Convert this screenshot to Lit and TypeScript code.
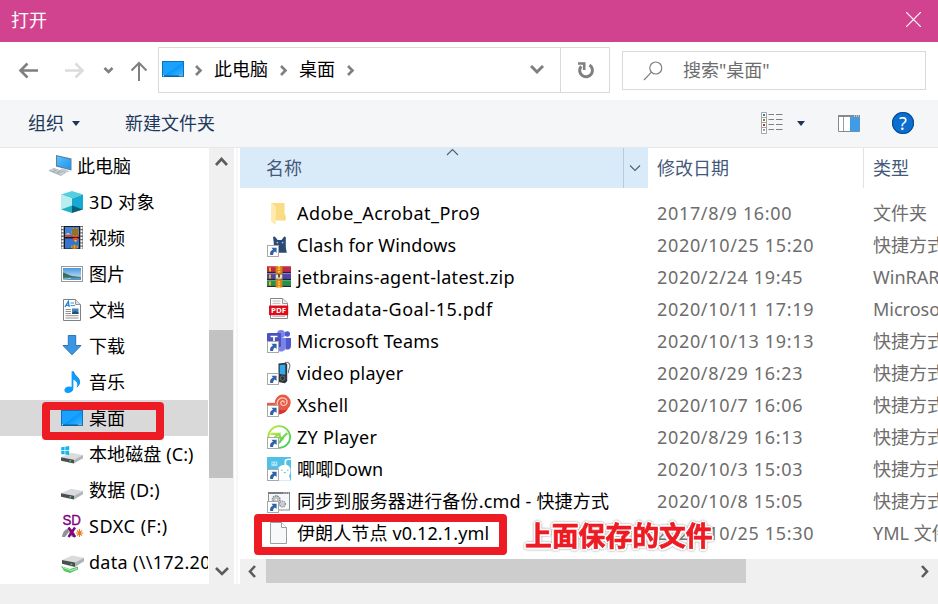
import { LitElement, html, css, svg, nothing } from "lit";
import { customElement, property } from "lit/decorators.js";

const shortcut = svg`
  <rect x=".5" y="12.5" width="11" height="11" fill="#fff" stroke="#a9a9a9"/>
  <path d="M4.4 14.8H9.6V20L7.9 18.4C6.4 19.4 6 20.6 6.2 22H3.2C2.6 19.6 3.6 17.6 6 16.5Z" fill="#2f63a6"/>`;

const desktopGlyph = svg`
  <defs><linearGradient id="dsk" x1="0" y1="0" x2="1" y2="1">
    <stop offset="0" stop-color="#19a0fb"/><stop offset=".5" stop-color="#1ba2ff"/><stop offset=".52" stop-color="#0597fb"/><stop offset="1" stop-color="#4cb6ff"/>
  </linearGradient></defs>
  <rect x="1.5" y="4.5" width="21" height="15" fill="url(#dsk)" stroke="#0a74b8"/>
  <path d="M2 19H22" stroke="#08598f"/><path d="M2 18.8h1M18.5 18.8h1M20.5 18.8h1" stroke="#fff"/>`;

const drive = svg`
  <path d="M1 15.3L11 10.8 23 13 14 17.7Z" fill="#d9dbdd"/>
  <path d="M14 17.7L23 13V16.2L14 21.5Z" fill="#b4b7ba"/>
  <path d="M1 15.3L14 17.7V21.5L1 18.8Z" fill="#4c4e51"/>
  <path d="M9.5 18.6l1.6.4" stroke="#4fe04f" stroke-width="1.4"/>`;

const ICONS: Record<string, unknown> = {
  desktop: desktopGlyph,
  pc: svg`
    <defs><linearGradient id="pcg" x1="0" y1="0" x2="1" y2="1"><stop offset="0" stop-color="#5fc3fb"/><stop offset=".5" stop-color="#38aaf5"/><stop offset="1" stop-color="#2496ec"/></linearGradient></defs>
    <path d="M8 1L23.5 4.5V16.5L8 12.5Z" fill="#5a7f9b"/><path d="M9 2.3L22.6 5.4V15.2L9 11.6Z" fill="url(#pcg)"/>
    <path d="M14 14.2l3.6 1 4.2 2.2-4.6 1.4-6-2z" fill="#c3ccd3"/>
    <path d="M1 16.6L6 14.4 17.5 18.6 13 21.6Z" fill="#d7dde1" stroke="#9aa6af" stroke-width=".7"/>
    <path d="M3 16.8l9.8 3.4M5 15.8l9.8 3.3M5 18.2l3-2.4M9 19.6l3-2.3" stroke="#8998a4" stroke-width=".6"/>`,
  cube: svg`
    <path d="M12 1L23 4.5 12 8.5 1 4.5Z" fill="#55cfdf"/><path d="M1 4.5L12 8.5V17L1 19.5Z" fill="#b9eef1"/>
    <path d="M23 4.5L12 8.5V17L23 19.5Z" fill="#17a9d4"/><path d="M12 15.5L1 19.5 12 23Z" fill="#20b2c4"/><path d="M12 15.5L23 19.5 12 23Z" fill="#075f78"/>`,
  video: svg`
    <rect x="1" y="0" width="22" height="23" fill="#6b6b6b"/><rect x="4" y="0" width="16" height="23" fill="#1a1a1a"/>
    <rect x="5" y="1" width="14" height="10" fill="#3f84d8"/><rect x="5" y="12.5" width="14" height="10" fill="#3476cf"/>
    <path d="M5 9.5l4-1 3 1 7-.5v2H5z" fill="#c8483e"/><path d="M5 8.5l3-1.5 3 1.5" fill="#e9dcc9"/>
    <ellipse cx="15" cy="6" rx="3.4" ry="4" fill="#e9a52b"/><path d="M13 3v6M15 2v8M17 3v6" stroke="#36301e" stroke-width=".9"/>
    <ellipse cx="15.5" cy="13" rx="2.8" ry="1.6" fill="#e74b31"/><path d="M14 14h3l-1 2h-1z" fill="#e3bb38"/>
    <ellipse cx="14.5" cy="20.7" rx="3.3" ry="2" fill="#e9a52b"/><path d="M13 19v4M16 19v4" stroke="#5f451d" stroke-width=".8"/>
    <path d="M2.5 1V23M21.5 1V23" stroke="#fff" stroke-width="1.9" stroke-dasharray="2 1.3"/>`,
  image: svg`
    <defs><linearGradient id="sky" x1="0" y1="0" x2="0" y2="1"><stop offset="0" stop-color="#4b98dc"/><stop offset="1" stop-color="#d5ecf8"/></linearGradient></defs>
    <rect x="1.5" y="4.5" width="21" height="15" fill="#fff" stroke="#9a9a9a"/><rect x="3" y="6" width="18" height="12" fill="url(#sky)"/>
    <path d="M3 10.5c3 .5 6 3 9 3.6l9 .8V16H3z" fill="#3b6f58"/><path d="M3 15.5h18v2.5H3z" fill="#5b95bd"/><path d="M3 17.5l8-1.2" stroke="#a4c8db"/>`,
  document: svg`
    <path d="M3.5 1.5H15.5L20.5 6.5V22.5H3.5Z" fill="#fff" stroke="#7f8285"/><path d="M15.5 1.5V6.5H20.5" fill="#dfe2e4" stroke="#94989b"/>
    <path d="M5 9L8.3 3.4 9.2 9M6.2 7.3H9" fill="none" stroke="#1d86cc" stroke-width="1.3"/><path d="M10.5 5H14M10.5 7.6H15" stroke="#3c8fcf"/>
    <path d="M5.5 11.5H11M5.5 13.5H11M5.5 15.5H11M5.5 17.7H18.5M5.5 20H18.5" stroke="#8d9194"/>
    <rect x="12" y="10.5" width="6.5" height="5.5" fill="#3f83c3"/><path d="M12 15l3-2 3.5 1.6V16H12z" fill="#244d66"/>`,
  download: svg`<path d="M8.3 1.5H15.7V11.5H21L12 20.8 3 11.5H8.3Z" fill="#3b96e2" stroke="#2b76be"/>`,
  music: svg`
    <path d="M11.6 1.2H13.4C14.5 6 20 7.5 19.6 12.5 19.3 14.6 18.3 16.2 16.9 17.2 18.2 13.7 16.4 11.2 13.4 9.7V18.5C13.4 21 11.3 22.8 8.3 23 5.8 23.1 4.3 21.9 4.4 20 4.6 17.8 7 16.4 9.8 16.6L11.6 17Z" fill="#0f9dfb"/>
    <path d="M13.4 1.5C14.5 6 20 7.5 19.6 12.5 19.3 14.6 18.3 16.2 16.9 17.2" fill="none" stroke="#0b74c0" stroke-width=".8"/>`,
  system: svg`${drive}<path d="M1.2 5.3L4.6 4.8V8.2H1.2ZM5.3 4.7L9.2 4.1V8.2H5.3ZM1.2 8.9H4.6V12.4L1.2 11.9ZM5.3 8.9H9.2V13L5.3 12.5Z" fill="#12b5f0"/>`,
  drive,
  sd: svg`
    <path d="M2 23C3 15 8 13.5 13 15.5L16 23H12L9 18 5 23Z" fill="#8a94a0"/><path d="M8 15.5l5 .4-3 6.1z" fill="#d9b760"/>
    <text x="2.4" y="11.4" textLength="18.5" lengthAdjust="spacingAndGlyphs" font-family="Liberation Sans" font-size="15" stroke="#800080" stroke-width=".4" fill="#800080">SD</text>
    <path d="M8.5 13.5L15 23M15 13.5L8.5 23" stroke="#800080" stroke-width="2.4"/>
    <path d="M19.5 15v8M15.8 19h7.4M17 16.4l5 5.2M22 16.4l-5 5.2" stroke="#ef7a22" stroke-width="1.1"/>`,
  network: svg`
    <path d="M1 16l9 3 8-2.5v3L10 23 4 21z" fill="#5ac46a"/><path d="M3 17.5l8 3 6-2" stroke="#b6efbd" stroke-width="1" fill="none"/>
    <path d="M2 10L12 5.5 24 7.8 15 12.5Z" fill="#d9dbdd"/><path d="M15 12.5L24 7.8V11.3L15 17Z" fill="#b0b3b6"/><path d="M2 10L15 12.5V17L2 13.8Z" fill="#4b4d50"/><path d="M10.5 14.2l1.8.5" stroke="#4fe04f" stroke-width="1.4"/>`,
  folder: svg`
    <path d="M4.5 2H17.5V15.5H18.3V19.5H8V23L4.5 20.5Z" fill="#f9dc84"/><path d="M4.5 2L8.8 5.3V23L4.5 20.5Z" fill="#fdebb0"/><path d="M17.5 13V19.5H18.3V13.8Z" fill="#efc75c"/>`,
  clash: svg`
    <path d="M6 4L7.8 3.6 10.7 7H14.5L17.2 3.6 18.8 4V14.5L19.8 19.8H6.8V10Z" fill="#2b4a73"/>
    <circle cx="10.4" cy="9.6" r=".9" fill="#a3bad5"/><circle cx="15.6" cy="9.6" r=".9" fill="#a3bad5"/>${shortcut}`,
  rar: svg`
    <rect x="0" y="1" width="24" height="7" fill="#b92c48"/><rect x="0" y="8" width="24" height="7" fill="#4c47a5"/><rect x="0" y="15" width="24" height="7" fill="#259150"/>
    <path d="M0 1.6H24" stroke="#e45a73"/><path d="M0 8.6H24" stroke="#8585d5"/><path d="M0 15.6H24" stroke="#49bc6b"/>
    <path d="M0 7.4H24M0 14.4H24M0 21.4H24" stroke="#2e1838"/><path d="M2 2.5h2v4H2zM2 9.5h2v4H2zM2 16.5h2v4H2z" fill="#efab25"/>
    <rect x="8.6" y="1" width="6.8" height="21.5" fill="#d88516"/><path d="M12 1V23" stroke="#f8cd4a" stroke-width="2.2" stroke-dasharray="1.6 .9"/>
    <rect x="8.4" y="9" width="7.2" height="5.2" rx="1.5" fill="#e6dfd3" stroke="#64513b" stroke-width=".8"/><path d="M12 9v3.5" stroke="#725227" stroke-width="2"/>`,
  pdf: svg`
    <path d="M3.5 1.5H15.5L20.5 6V21.5H3.5Z" fill="#fff" stroke="#858585"/><path d="M15.5 1.5V6.5H20.5" fill="#eee" stroke="#999"/><path d="M5.5 4H13.5M5.5 6.3H13.5M5.5 19.5H18" stroke="#b9b9b9"/>
    <rect x="2" y="8.6" width="19.2" height="9.6" rx=".6" fill="#e00b18"/>
    <text x="4" y="16.2" textLength="15" lengthAdjust="spacingAndGlyphs" font-family="Noto Sans" font-size="7.7" font-weight="700" fill="#fff">PDF</text>`,
  teams: svg`
    <circle cx="20.3" cy="5" r="2.7" fill="#5059c9"/><path d="M18 9H24V17C24 20 21.5 21 18.5 20.5Z" fill="#5059c9"/>
    <circle cx="14" cy="5" r="4" fill="#7b83eb"/><path d="M10 9H19V17C19 21 16.2 23 13 22.5L10 21.5Z" fill="#7b83eb"/>
    <rect x="0" y="4" width="14" height="14" rx="1" fill="#4b53bc"/><path d="M3.5 7.5H10.5M7 7.5V14" stroke="#fff" stroke-width="1.7"/>${shortcut}`,
  player: svg`
    <path d="M17.5 4C18 0 22.2.7 22.8 4.2 23.2 7.5 21 8.2 21.5 12" fill="none" stroke="#777" stroke-width="1.1"/>
    <path d="M11.5 2.5L18.8 1.8 20.2 3.4V20L18 22.3 11.5 21Z" fill="#2e3438"/><path d="M12.7 4L18.3 3.4V13.7L12.7 13.1Z" fill="#32a8f0"/>
    <circle cx="15.6" cy="17.2" r="2.3" fill="none" stroke="#687276" stroke-width=".9"/>${shortcut}`,
  xshell: svg`
    <path d="M0 9.8H8V12H0Z" fill="#e95c43"/><path d="M21.5 13C21 17 18 20.5 12 21.5V18L9 14Z" fill="#d8322f"/>
    <circle cx="15.8" cy="9.5" r="7.9" fill="#e85a46"/>
    <path d="M10.8 13.2C8.8 8 12.6 4.4 16.6 5 20.8 5.7 21.2 11 17.6 12.3 14.4 13.3 12.6 9.8 14.6 8.3 16.4 7.2 18 9 16.8 10.2" fill="none" stroke="#ffd9cb" stroke-width="1.1"/>${shortcut}`,
  zy: svg`
    <defs><linearGradient id="zyg" x1="0" y1="0" x2="1" y2="1"><stop offset="0" stop-color="#c4e938"/><stop offset="1" stop-color="#35ca62"/></linearGradient></defs>
    <circle cx="12.2" cy="12" r="10.9" fill="#fff" stroke="url(#zyg)" stroke-width="1.8"/>
    <path d="M3.5 8.8H11.5L5.5 15H11M12.2 8.5L13.3 13.2 15.5 12.8 20.3 8M16.4 12.6L11.8 18" fill="none" stroke="url(#zyg)" stroke-width="2.3"/>${shortcut}`,
  jiji: svg`
    <rect x="0" y="0" width="24" height="23.5" fill="#50c0e5"/>
    <rect x="4.4" y="4.5" width="6" height="4.6" fill="#a9e3f5"/><path d="M5.4 6.2h1M8 6.2h1" stroke="#46b2d7"/>
    <path d="M17.5 8V4.5C17.5 1.8 19.5 1.3 24 1.5V3C20 3 19.2 3.2 19.2 5.2V7.4Q23.5 9 23.5 13.5 23.5 17 22 18.5L23.5 23.5H12C10 21 9.6 16 11 12.5 12 9 14 8 17.5 8Z" fill="#fff"/>
    <path d="M14 13.2h1.6M20 13.2h1.6M16.8 15.6h2" stroke="#62bcda" stroke-width="1"/>${shortcut}`,
  cmd: svg`
    <rect x="1.5" y="3.5" width="21" height="17.5" fill="#f6f7f8" stroke="#8c9196"/><path d="M1 4H23" stroke="#777d83" stroke-width="2"/><path d="M16.5 4h1M18.7 4h1M20.8 4h1" stroke="#fff"/>
    <circle cx="9.2" cy="10.6" r="3.6" fill="#d7dbde" stroke="#858c92" stroke-width="1.9" stroke-dasharray="1.5 .7"/><circle cx="9.2" cy="10.6" r="1.5" fill="#fff" stroke="#8b9298" stroke-width=".7"/>
    <circle cx="15.4" cy="15" r="2.8" fill="#e7eaec" stroke="#8b9298" stroke-width="1.6" stroke-dasharray="1.3 .7"/><circle cx="15.4" cy="15" r="1" fill="#fff" stroke="#8b9298" stroke-width=".6"/>${shortcut}`,
  blank: svg`<path d="M3.5 1.5H14.5L19.5 6.5V22.5H3.5Z" fill="#f7f8f9" stroke="#9a9ea1"/><path d="M14.5 1.5V6.5H19.5" fill="#fff" stroke="#9a9ea1"/>`,
};

@customElement("ui-icon")
class UiIcon extends LitElement {
  @property() name = "";
  static styles = css`
    :host { display: block; flex: none; width: 24px; height: 24px; }
    svg { display: block; width: 24px; height: 24px; }
  `;
  render() {
    return html`<svg viewBox="0 0 24 24">${ICONS[this.name]}</svg>`;
  }
}

const CHEVRONS: Record<string, string> = {
  right: "M1 1L5.5 5.5 1 10",
  left: "M7 1L2 6.5 7 12",
  down: "M1 1L7 7 13 1",
  up: "M1 8L6.5 2 12 8",
};

interface Place { icon: string; label: string; root?: boolean; selected?: boolean; track?: number }
const PLACES: Place[] = [
  { icon: "pc", label: "此电脑", root: true },
  { icon: "cube", label: "3D 对象", track: 0.4 },
  { icon: "video", label: "视频" },
  { icon: "image", label: "图片" },
  { icon: "document", label: "文档" },
  { icon: "download", label: "下载" },
  { icon: "music", label: "音乐" },
  { icon: "desktop", label: "桌面", selected: true },
  { icon: "system", label: "本地磁盘 (C:)", track: 0.1 },
  { icon: "drive", label: "数据 (D:)", track: 0.2 },
  { icon: "sd", label: "SDXC (F:)", track: 0.55 },
  { icon: "network", label: "data (\\\\172.20.1.8)", track: 0.3 },
];

interface Entry { icon: string; name: string; date: string; type: string; track?: number }
const FILES: Entry[] = [
  { icon: "folder", name: "Adobe_Acrobat_Pro9", date: "2017/8/9 16:00", type: "文件夹", track: 0.43 },
  { icon: "clash", name: "Clash for Windows", date: "2020/10/25 15:20", type: "快捷方式", track: 0.16 },
  { icon: "rar", name: "jetbrains-agent-latest.zip", date: "2020/2/24 19:45", type: "WinRAR ZIP", track: 0.3 },
  { icon: "pdf", name: "Metadata-Goal-15.pdf", date: "2020/10/11 17:19", type: "Microsoft Edge", track: 0.54 },
  { icon: "teams", name: "Microsoft Teams", date: "2020/10/13 19:13", type: "快捷方式", track: 0.22 },
  { icon: "player", name: "video player", date: "2020/8/29 16:23", type: "快捷方式", track: 0.27 },
  { icon: "xshell", name: "Xshell", date: "2020/10/7 16:06", type: "快捷方式", track: 0.3 },
  { icon: "zy", name: "ZY Player", date: "2020/8/29 16:13", type: "快捷方式", track: 0.3 },
  { icon: "jiji", name: "唧唧Down", date: "2020/10/3 15:03", type: "快捷方式", track: 0.25 },
  { icon: "cmd", name: "同步到服务器进行备份.cmd - 快捷方式", date: "2020/10/8 15:05", type: "快捷方式", track: 0.17 },
  { icon: "blank", name: "伊朗人节点 v0.12.1.yml", date: "2020/10/25 15:30", type: "YML 文件", track: 0.12 },
];

const tracking = (n?: number) => (n ? `letter-spacing:${n}px` : nothing);
const chevron = (dir: string, w: number, h: number, cls = "") =>
  html`<svg class="chev ${cls}" width=${w} height=${h} viewBox="0 0 ${w} ${h}"><path d=${CHEVRONS[dir]} /></svg>`;

@customElement("dialog-nav")
class DialogNav extends LitElement {
  static styles = css`
    :host { display: flex; height: 58px; background: #fff; flex: none; }
    svg { display: block; flex: none; fill: none; stroke: #7f7f7f; stroke-width: 2.6; }
    .arrows { display: flex; width: 158px; }
    .arrows svg { width: 158px; height: 58px; }
    .address { box-sizing: border-box; display: flex; align-items: center; width: 452px; height: 46px; margin-top: 5px; border: 1px solid #d9d9d9; }
    .crumbs { display: flex; align-items: center; flex: 1; padding-left: 2px; }
    .crumbs ui-icon { margin-top: -2px; }
    .crumbs span { line-height: 24px; padding-bottom: 2px; }
    .first { margin: 0 11px 0 10px; }
    .mid { margin: 0 11px 0 12px; }
    .drop { margin-right: 16px; stroke-width: 3; }
    .refresh { display: flex; align-items: center; justify-content: center; width: 48px; height: 44px; border-left: 1px solid #d9d9d9; }
    .refresh svg { margin-left: 2px; }
    .search { box-sizing: border-box; display: flex; align-items: center; width: 304px; height: 39px; margin: 9px 0 0 12px; padding-left: 20px; border: 1px solid #d9d9d9; color: #6d6d6d; }
    .search span { padding-bottom: 1px; }
    .search svg { stroke-width: 1.2; margin-right: 20px; }
  `;
  render() {
    return html`
      <div class="arrows"><svg viewBox="0 42 158 58">
        <path d="M20 70.5H38M27.5 63.5L20.5 70.5 27.5 77.5" />
        <path d="M65 70.5H83M75.5 63.5L82.5 70.5 75.5 77.5" stroke="#dcdcdc" />
        <path d="M104.5 68L108.5 72 112.5 68" />
        <path d="M139 81V63.5M131.5 70.5L139 63 146.5 70.5" stroke-width="2" />
      </svg></div>
      <div class="address">
        <div class="crumbs">
          <ui-icon name="desktop"></ui-icon>
          ${chevron("right", 8, 11, "first")}<span>此电脑</span>
          ${chevron("right", 8, 11, "mid")}<span>桌面</span>
          ${chevron("right", 8, 11, "mid")}
        </div>
        ${chevron("down", 14, 10, "drop")}
        <div class="refresh"><svg width="18" height="18" viewBox="0 0 18 18">
          <path d="M12.5 4A6.4 6.4 0 1 1 4.2 5.2" stroke-width="3" /><path d="M1 2.5H7.2V9" stroke-width="2.6" />
        </svg></div>
      </div>
      <div class="search"><svg width="20" height="20" viewBox="0 0 20 20"><circle cx="12.8" cy="7" r="6"/><path d="M8.5 11.2L1 19"/></svg><span>搜索"桌面"</span></div>`;
  }
}

@customElement("dialog-toolbar")
class DialogToolbar extends LitElement {
  static styles = css`
    :host { box-sizing: border-box; display: flex; align-items: center; height: 48px; flex: none; padding: 0 24px 1px 28px; background: #f5f6f8; border-bottom: 1px solid #e5e7ea; color: #1e395b; }
    svg { display: block; flex: none; }
    .caret { width: 0; height: 0; border: 4px solid transparent; border-top: 5px solid #1e3559; border-bottom: 0; }
    .org { display: flex; align-items: center; gap: 8px; width: 97px; }
    .grow { flex: 1; }
    .view { display: flex; align-items: center; gap: 14px; margin-right: 33px; }
    .pane { margin-right: 32px; }
    .help { display: grid; place-items: center; width: 22px; height: 22px; border-radius: 50%; background: #0b6fcf; box-shadow: inset 0 0 0 1px #064e96; color: #fff; font-size: 18px; line-height: 22px; }
  `;
  render() {
    return html`
      <div class="org">组织<i class="caret"></i></div><span>新建文件夹</span><div class="grow"></div>
      <div class="view"><svg width="22" height="22" viewBox="0 0 22 22">
        <path d="M.5.5H5.5V21.5H.5ZM.5 5.5H5.5M.5 10.5H5.5M.5 15.5H5.5" fill="#fff" stroke="#a5a5a5"/>
        <path d="M2 3H4" stroke="#3577c2" stroke-width="2"/><path d="M2 8H4" stroke="#84802d" stroke-width="2"/><path d="M2 13H4" stroke="#c43224" stroke-width="2"/><path d="M2 18H4" stroke="#7fb08a" stroke-width="2"/>
        <path d="M7.5 2.5H13M15 2.5H21.5M7.5 7.5H13M15 7.5H21.5M7.5 12.5H13M15 12.5H21.5M7.5 17.5H13M15 17.5H21.5" stroke="#808080"/>
      </svg><i class="caret"></i></div>
      <svg class="pane" width="22" height="17" viewBox="0 0 22 17"><path d="M.5.5H21.5V16.5H.5Z" fill="#fff" stroke="#858a8f"/><path d="M0 1H22" stroke="#858a8f" stroke-width="2"/><path d="M5.5 2V16" stroke="#a0a0a0"/><path d="M12 2H21.5V16.5H12Z" fill="#3f9ce6"/><path d="M16 1h1M18 1h1M20 1h1" stroke="#fff"/></svg>
      <div class="help">?</div>`;
  }
}

@customElement("place-tree")
class PlaceTree extends LitElement {
  static styles = css`
    :host { display: flex; width: 240px; height: 436px; flex: none; background: #fff; }
    .list { width: 208px; overflow: hidden; position: relative; }
    .row { box-sizing: border-box; display: flex; align-items: center; gap: 5px; height: 36px; padding-left: 60px; white-space: nowrap; }
    .root { padding-left: 48px; }
    .selected { background: #d9d9d9; }
    .bar { box-sizing: border-box; display: flex; flex-direction: column; align-items: center; width: 25px; margin-left: 1px; padding: 9px 0 8px; background: #f0f0f0; }
    .thumb { width: 24px; height: 148px; margin: 163px 1px 0 0; background: #c2c2c2; }
    .space { flex: 1; }
    .edge { width: 2px; margin-left: 2px; background: #f5f7fa; }
    svg { display: block; fill: none; stroke: #5c5c5c; stroke-width: 2.6; }
    .mark { position: absolute; box-sizing: border-box; left: 42px; top: 254px; width: 122px; height: 38px; border: 8px solid #ed1c24; border-radius: 4px; }
  `;
  render() {
    return html`
      <div class="list">
        ${PLACES.map((p) => html`<div class="row ${p.root ? "root" : ""} ${p.selected ? "selected" : ""}">
          <ui-icon name=${p.icon}></ui-icon><span style=${tracking(p.track)}>${p.label}</span></div>`)}
        <div class="mark"></div>
      </div>
      <div class="bar">${chevron("up", 13, 10)}<div class="thumb"></div><div class="space"></div>${chevron("down", 14, 9)}</div>
      <div class="edge"></div>`;
  }
}

@customElement("file-list")
class FileList extends LitElement {
  static styles = css`
    :host { display: flex; flex-direction: column; flex: 1; min-width: 0; height: 436px; background: #fff; position: relative; overflow: hidden; }
    .head, .row { display: grid; grid-template-columns: 408px 216px 1fr; }
    .head { height: 40px; color: #44597a; line-height: 40px; }
    .name-head { display: grid; grid-template-columns: 383px 25px; background: #d9ebf9; position: relative; }
    .name-head span { padding-left: 26px; }
    .split { display: grid; place-items: center; padding-right: 3px; border-left: 1px solid #b6cbdc; }
    .thin { fill: none; stroke: #555e68; stroke-width: 1.1; }
    .sort { position: absolute; left: 206px; top: 0; }
    .date-head { box-sizing: border-box; padding-left: 9px; border-right: 1px solid #e3e3e3; }
    .type-head { padding-left: 9px; }
    .rows { padding-top: 9px; height: 362px; }
    .row { height: 32px; align-items: center; white-space: nowrap; line-height: 32px; color: #6d6d6d; }
    .name { display: flex; align-items: center; gap: 6px; padding-left: 27px; color: #000; }
    .date { padding-left: 9px; letter-spacing: 0.67px; }
    .type { padding-left: 9px; }
    .hbar { display: flex; align-items: center; height: 25px; background: #f0f0f0; padding: 0 9px 0 8px; }
    .hbar svg { display: block; fill: none; stroke: #5c5c5c; stroke-width: 2.6; }
    .thumb { align-self: flex-start; width: 480px; height: 24px; margin-left: 9px; background: #cdcdcd; }
    .space { flex: 1; }
    .mark { position: absolute; box-sizing: border-box; left: 14px; top: 366px; width: 253px; height: 41px; border: 8px solid #ed1c24; border-radius: 4px; }
    .note {
      position: absolute; left: 285px; top: 368px; font-size: 26.8px; line-height: 40px; font-weight: 700; color: #ed1c24; white-space: nowrap;
      -webkit-text-stroke: 0.7px #ed1c24;
      text-shadow: 2px 0 #fff, -2px 0 #fff, 0 2px #fff, 0 -2px #fff, 1.5px 1.5px #fff, -1.5px 1.5px #fff, 1.5px -1.5px #fff, -1.5px -1.5px #fff;
      filter: drop-shadow(0 0 1px #999);
    }
  `;
  render() {
    return html`
      <div class="head">
        <div class="name-head"><span>名称</span><div class="split"><svg class="thin" width="12" height="8" viewBox="0 0 12 8"><path d="M1 1.5L6 6.5 11 1.5"/></svg></div>
          <svg class="thin sort" width="13" height="8" viewBox="0 0 13 8"><path d="M1 7L6.5 1.5 12 7"/></svg></div>
        <div class="date-head">修改日期</div><div class="type-head">类型</div>
      </div>
      <div class="rows">${FILES.map((f) => html`<div class="row">
        <div class="name"><ui-icon name=${f.icon}></ui-icon><span style=${tracking(f.track)}>${f.name}</span></div>
        <div class="date">${f.date}</div><div class="type">${f.type}</div></div>`)}</div>
      <div class="hbar">${chevron("left", 9, 13)}<div class="thumb"></div><div class="space"></div>
        <svg width="9" height="13" viewBox="0 0 9 13"><path d="M2 1L7 6.5 2 12"/></svg></div>
      <div class="mark"></div><div class="note">上面保存的文件</div>`;
  }
}

@customElement("app-root")
class AppRoot extends LitElement {
  static styles = css`
    :host { display: flex; flex-direction: column; width: 938px; height: 604px; overflow: hidden; background: #f0f0f0; font: 18px/24px "Noto Sans", "Noto Sans CJK SC", sans-serif; color: #000; }
    .title { box-sizing: border-box; display: flex; align-items: center; justify-content: space-between; height: 42px; flex: none; padding: 0 17px 3px 11px; background: #d1438e; color: #fff; }
    .title svg { fill: none; stroke: #fff; stroke-width: 1.2; }
    .body { display: flex; }
  `;
  render() {
    return html`
      <div class="title"><span>打开</span><svg width="15" height="15" viewBox="0 0 15 15"><path d="M0 0L15 15M15 0L0 15"/></svg></div>
      <dialog-nav></dialog-nav>
      <dialog-toolbar></dialog-toolbar>
      <div class="body"><place-tree></place-tree><file-list></file-list></div>`;
  }
}
